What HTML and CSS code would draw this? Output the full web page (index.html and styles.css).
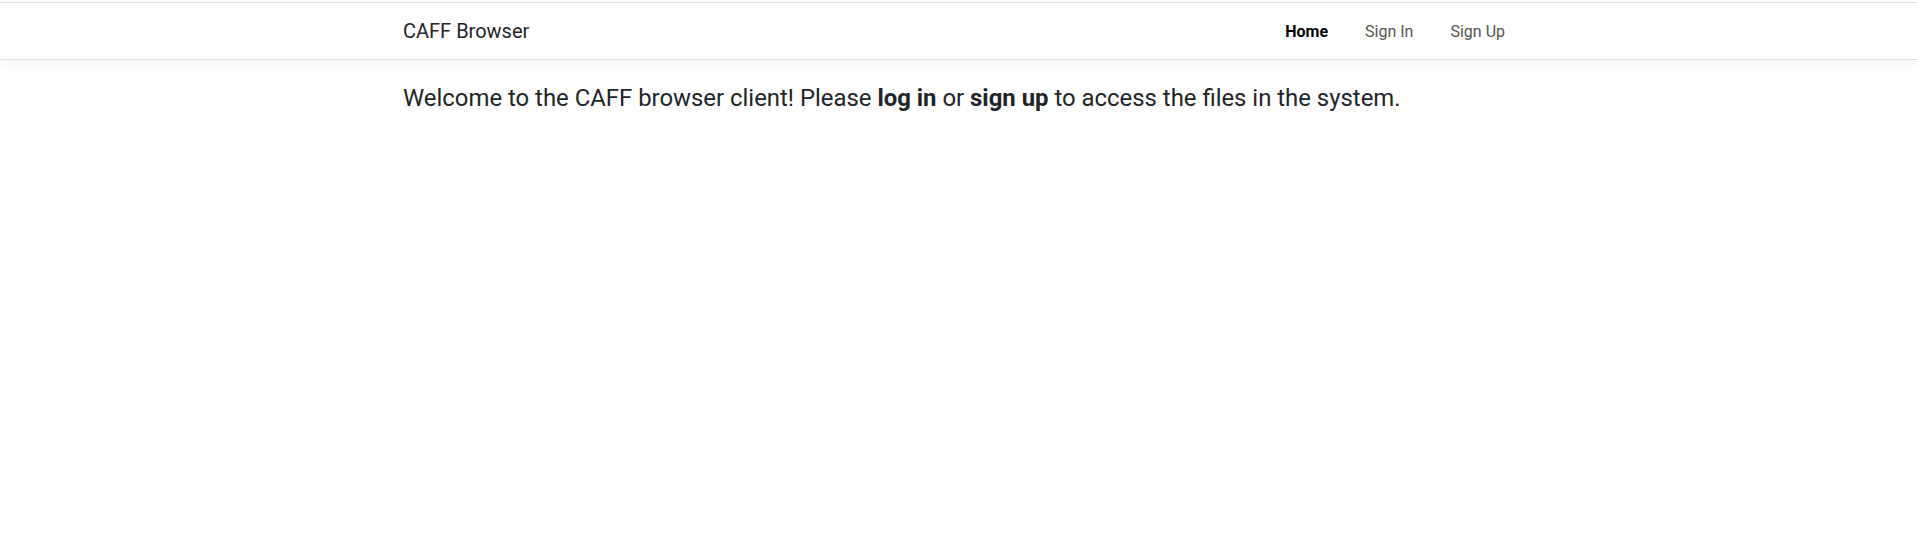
FILE: index.html
```html
<!DOCTYPE html>
<html lang="en">
<head>
<meta charset="utf-8">
<title>CAFF Browser</title>
<link rel="stylesheet" href="styles.css">
</head>
<body>
<header class="header">
  <nav class="navbar">
    <div class="container nav-inner">
      <a class="brand" href="#">CAFF Browser</a>
      <ul class="nav-links">
        <li><a class="nav-link active" href="#">Home</a></li>
        <li><a class="nav-link" href="#">Sign In</a></li>
        <li><a class="nav-link" href="#">Sign Up</a></li>
      </ul>
    </div>
  </nav>
</header>
<main class="container main">
  <p class="welcome">Welcome to the CAFF browser client! Please <b>log in</b> or <b>sign up</b> to access the files in the system.</p>
</main>
</body>
</html>
```
FILE: styles.css
```css
* { box-sizing: border-box; }
html, body { margin: 0; padding: 0; background: #fff; }
body {
  font-family: Roboto, "Liberation Sans", sans-serif;
  color: #212529;
  padding-top: 2px;
}
.container {
  width: 1141px;
  margin: 0 auto;
  padding: 0 15px;
}
.navbar {
  border-top: 1px solid #dedede;
  border-bottom: 1px solid #e0e0e0;
  box-shadow: 0 4px 12px rgba(0, 0, 0, 0.05);
  background: #fff;
}
.nav-inner {
  height: 56px;
  display: flex;
  align-items: center;
  justify-content: space-between;
}
.brand {
  font-size: 20px;
  color: #212529;
  text-decoration: none;
}
.nav-links {
  list-style: none;
  margin: 0;
  padding: 0;
  display: flex;
  gap: 5px;
  margin-right: -7px;
}
.nav-link {
  display: block;
  padding: 8px 16px;
  font-size: 16px;
  color: #555;
  text-decoration: none;
}
.nav-link.active {
  color: #000;
  font-weight: 700;
}
.main {
  padding-top: 21px;
}
.welcome {
  margin: 0;
  font-size: 23.9px;
  line-height: 1.5;
}
.welcome b { font-weight: 700; }
```
